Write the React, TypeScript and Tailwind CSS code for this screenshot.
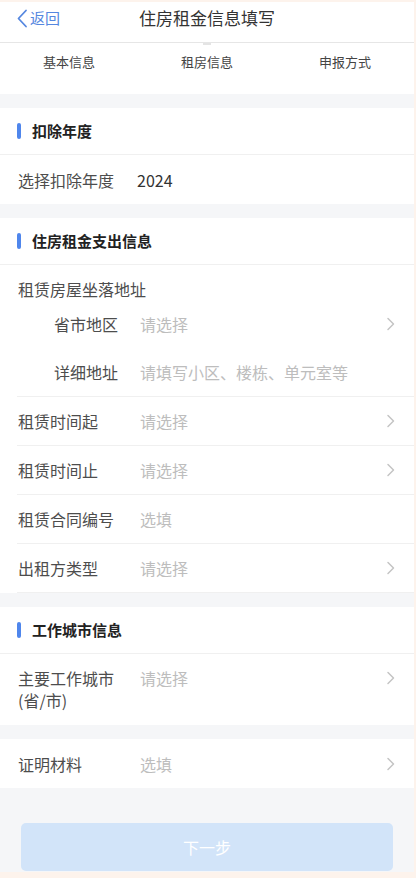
import React from "react";

const font = { fontFamily: '"Noto Sans CJK SC", "Noto Sans", sans-serif' };

function Chevron() {
  return (
    <svg width="9" height="14" viewBox="0 0 9 14" className="shrink-0">
      <path d="M2 1.5 L7.5 7 L2 12.5" fill="none" stroke="#c4c4c4" strokeWidth="1.5" strokeLinecap="round" strokeLinejoin="round" />
    </svg>
  );
}

function SectionHeader({ title }: { title: string }) {
  return (
    <div className="h-[47px] flex items-center pl-[17px] border-b border-[#f0f0f0] bg-white">
      <div className="w-[4px] h-[16px] rounded-full bg-[#4f86ec]" />
      <div className="ml-[11px] text-[15px] font-bold text-[#222]">{title}</div>
    </div>
  );
}

function Row({
  label,
  value,
  placeholder = true,
  arrow = false,
  divider = true,
}: {
  label: string;
  value: string;
  placeholder?: boolean;
  arrow?: boolean;
  divider?: boolean;
}) {
  return (
    <div className="pl-[17px] bg-white">
      <div className={`h-[49px] flex items-center pr-[19px] ${divider ? "border-b border-[#f0f0f0]" : ""}`}>
        <div className="w-[123px] pl-[1px] text-[16px] text-[#4d4d4d] shrink-0">{label}</div>
        <div className={`flex-1 text-[16px] ${placeholder ? "text-[#bdbdbd]" : "text-[#333] -ml-[3px]"}`}>{value}</div>
        {arrow && <Chevron />}
      </div>
    </div>
  );
}

export default function App() {
  return (
    <div className="w-[416px] h-[878px] bg-[#fdf3ec] pt-[2px] pr-[2px] overflow-hidden" style={font}>
      <div className="w-[414px] h-[870px] bg-[#f5f6f8] flex flex-col">
        {/* Nav */}
        <div className="h-[41px] pb-[9px] bg-white border-b border-[#e6e6e6] relative flex items-center justify-center">
          <div className="absolute left-[16px] top-0 h-[32px] flex items-center text-[#5587e0]">
            <svg width="12" height="19" viewBox="0 0 12 19">
              <path d="M10 1.5 L2.5 9.5 L10 17.5" fill="none" stroke="#5587e0" strokeWidth="1.8" strokeLinecap="round" strokeLinejoin="round" />
            </svg>
            <span className="ml-[2px] text-[15px]">返回</span>
          </div>
          <div className="text-[17px] text-[#333]">住房租金信息填写</div>
        </div>
        {/* Tabs */}
        <div className="h-[51px] bg-white relative">
          <div className="absolute left-[203px] top-0 w-[8px] h-[2px] bg-[#e4e4e4]" />
          <div className="grid grid-cols-3 pt-[9px] text-[13px] text-[#444]">
            <div className="text-center">基本信息</div>
            <div className="text-center">租房信息</div>
            <div className="text-center">申报方式</div>
          </div>
        </div>

        <div className="h-[14px]" />
        <SectionHeader title="扣除年度" />
        <Row label="选择扣除年度" value="2024" placeholder={false} divider={false} />

        <div className="h-[14px]" />
        <SectionHeader title="住房租金支出信息" />
        <div className="bg-white">
          <div className="h-[34px] pl-[18px] pt-[13px] text-[16px] leading-[22px] text-[#4d4d4d]">租赁房屋坐落地址</div>
          <div className="h-[49px] flex items-center pl-[54px] pr-[19px]">
            <div className="w-[86px] text-[16px] text-[#4d4d4d] shrink-0">省市地区</div>
            <div className="flex-1 text-[16px] text-[#bdbdbd]">请选择</div>
            <Chevron />
          </div>
          <div className="pl-[17px]">
            <div className="h-[49px] flex items-center pl-[37px] pr-[19px] border-b border-[#f0f0f0]">
              <div className="w-[86px] text-[16px] text-[#4d4d4d] shrink-0">详细地址</div>
              <div className="flex-1 text-[16px] text-[#bdbdbd]">请填写小区、楼栋、单元室等</div>
            </div>
          </div>
        </div>
        <Row label="租赁时间起" value="请选择" arrow />
        <Row label="租赁时间止" value="请选择" arrow />
        <Row label="租赁合同编号" value="选填" />
        <Row label="出租方类型" value="请选择" arrow />

        <div className="h-[14px]" />
        <SectionHeader title="工作城市信息" />
        <div className="bg-white pl-[18px] pr-[19px] pt-[13px] pb-[14px] flex items-start">
          <div className="w-[122px] text-[16px] leading-[22px] text-[#4d4d4d] shrink-0">
            主要工作城市
            <br />
            (省/市)
          </div>
          <div className="flex-1 text-[16px] leading-[22px] text-[#bdbdbd]">请选择</div>
          <div className="h-[22px] flex items-center">
            <Chevron />
          </div>
        </div>

        <div className="h-[14px]" />
        <Row label="证明材料" value="选填" arrow divider={false} />

        <div className="h-[35px]" />
        <div className="mx-[21px] h-[48px] rounded-[5px] bg-[#d2e4f9] flex items-center justify-center text-[16px] text-white">
          下一步
        </div>
      </div>
    </div>
  );
}
